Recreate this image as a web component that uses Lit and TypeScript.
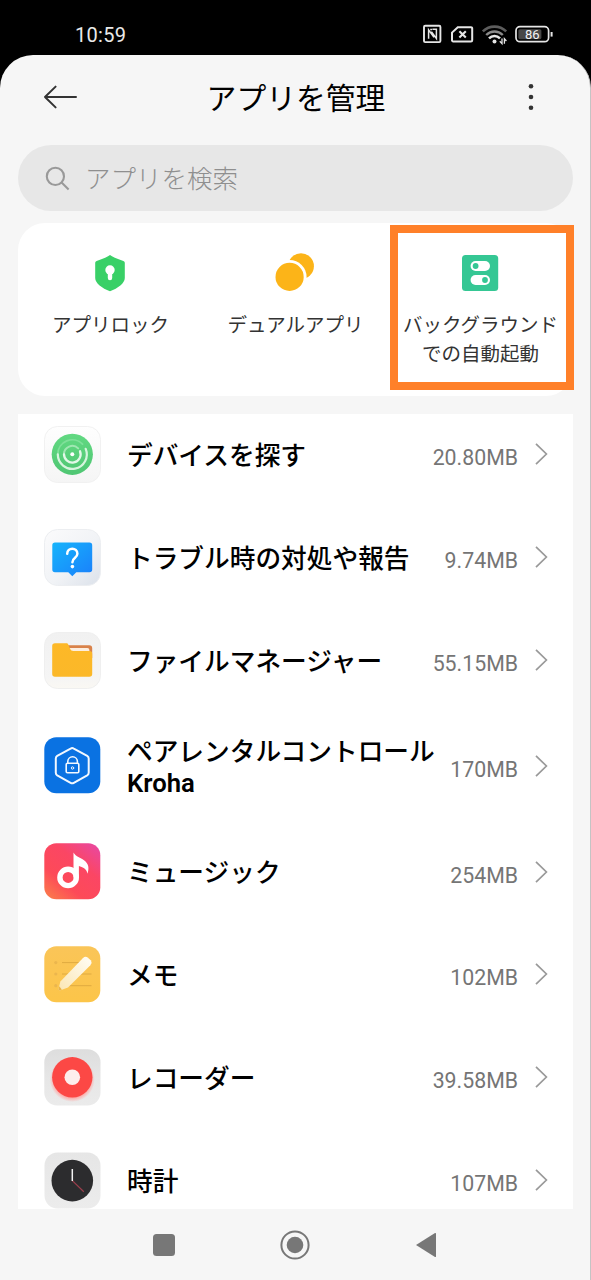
import { LitElement, html, css, svg } from "lit";
import { customElement, property } from "lit/decorators.js";

const icons: Record<string, unknown> = {
  find: svg`
    <defs>
      <linearGradient id="a" x1="0" y1="0" x2="0" y2="1"><stop offset="0" stop-color="#fefefe"/><stop offset="1" stop-color="#f5f5f5"/></linearGradient>
      <linearGradient id="b" x1="0" y1="0" x2="0" y2="1"><stop offset="0" stop-color="#62d982"/><stop offset="1" stop-color="#4fc673"/></linearGradient>
    </defs>
    <rect x=".5" y=".5" width="56" height="56" rx="13" fill="url(#a)" stroke="#f1f1f1"/>
    <circle cx="28.3" cy="28.3" r="20.6" fill="url(#b)"/>
    <g fill="none" stroke-linecap="round" transform="translate(28.3 28.3)">
      <path d="M-14.5 0A14.5 14.5 0 0 1 10.25 -10.25" stroke="#7fe09a" stroke-width="1.8"/>
      <path d="M13.4 -5.5A14.5 14.5 0 1 1 -14.5 0" stroke="#d6f5de" stroke-width="2.2"/>
      <path d="M-8.3 0A8.3 8.3 0 0 1 5.9 -5.9" stroke="#a0e7b3" stroke-width="2"/>
      <path d="M7.7 -3.1A8.3 8.3 0 1 1 -8.3 0" stroke="#e2f8e8" stroke-width="2.3"/>
    </g>
    <circle cx="28.3" cy="28.3" r="2" fill="#fff"/>`,
  help: svg`
    <defs>
      <linearGradient id="a" x1="0" y1="0" x2="1" y2="1"><stop offset="0" stop-color="#fbfbfc"/><stop offset=".55" stop-color="#f1f3f6"/><stop offset="1" stop-color="#dbe1ea"/></linearGradient>
      <linearGradient id="b" x1="0" y1="0" x2="1" y2="1"><stop offset="0" stop-color="#16b4fb"/><stop offset="1" stop-color="#1a80fb"/></linearGradient>
    </defs>
    <rect x=".5" y=".5" width="56" height="56" rx="13" fill="url(#a)" stroke="#eceef1"/>
    <path d="M11 13.5H45.5A2.7 2.7 0 0 1 48.2 16.2V40.6A2.7 2.7 0 0 1 45.5 43.3H32.3L28.3 47.3L24.3 43.3H11A2.7 2.7 0 0 1 8.3 40.6V16.2A2.7 2.7 0 0 1 11 13.5Z" fill="url(#b)"/>
    <path d="M23.2 24.8C23.2 18 33.4 18 33.4 24.8C33.4 28.8 28.4 28.6 28.4 33.2" fill="none" stroke="#fff" stroke-width="2.5" stroke-linecap="round"/>
    <circle cx="28.4" cy="37.6" r="1.8" fill="#fff"/>`,
  files: svg`
    <defs>
      <linearGradient id="a" x1="0" y1="0" x2="0" y2="1"><stop offset="0" stop-color="#f1f1f1"/><stop offset=".8" stop-color="#f5f5f5"/><stop offset="1" stop-color="#faf8f3"/></linearGradient>
      <linearGradient id="b" x1="0" y1="0" x2="0" y2="1"><stop offset="0" stop-color="#fdb827"/><stop offset="1" stop-color="#fbb829"/></linearGradient>
    </defs>
    <rect x=".5" y=".5" width="56" height="56" rx="13" fill="url(#a)" stroke="#efefef"/>
    <path d="M22 13.2H45.2A3 3 0 0 1 48.2 16.2V26H22Z" fill="#d9824a"/>
    <path d="M24 16H43.4A2 2 0 0 1 45.4 18V24H24Z" fill="#fdeede"/>
    <path d="M11 11.3H22.6C24.4 11.3 24.8 14 26 16.6C27 18.6 27.6 19 29.4 19H45.4A2.8 2.8 0 0 1 48.2 21.8V42A2.8 2.8 0 0 1 45.4 44.8H11A2.8 2.8 0 0 1 8.2 42V14.1A2.8 2.8 0 0 1 11 11.3Z" fill="url(#b)"/>`,
  kroha: svg`
    <rect x=".3" y=".3" width="56" height="56" rx="12" fill="#0a72e2"/>
    <g fill="none" stroke="#f2f8ff" stroke-linejoin="round" stroke-linecap="round">
      <path d="M26.6 11.6Q28.2 10.6 29.8 11.6L43.2 18.9Q44.7 19.8 44.7 21.4V35.8Q44.7 37.4 43.2 38.3L29.8 45.9Q28.2 46.8 26.6 45.9L13.2 38.3Q11.8 37.4 11.8 35.8V21.4Q11.8 19.8 13.2 18.9Z" stroke-width="2"/>
      <rect x="22.2" y="26.2" width="12.6" height="9.6" rx="1.2" stroke-width="1.6"/>
      <path d="M23.8 26V24.6A4.8 4.8 0 0 1 33.4 24.6V26" stroke-width="1.6"/>
      <circle cx="28.5" cy="31" r="1.2" stroke-width="1"/>
    </g>`,
  music: svg`
    <defs>
      <linearGradient id="a" x1=".1" y1="1" x2=".9" y2="0"><stop offset="0" stop-color="#fb7a4c"/><stop offset=".3" stop-color="#fd4a58"/><stop offset=".65" stop-color="#fb4664"/><stop offset="1" stop-color="#e9489f"/></linearGradient>
    </defs>
    <rect x=".3" y=".3" width="56" height="56" rx="12" fill="url(#a)"/>
    <circle cx="24.1" cy="34.4" r="8.2" fill="none" stroke="#fff" stroke-width="5.4"/>
    <path d="M29.5 34.6V9.6C32 14 36.6 14.6 40 17.3C44.6 20.5 45.5 25 43.4 30.8C43 27 41 24.9 34.9 23V34.6Z" fill="#fff"/>`,
  memo: svg`
    <defs>
      <linearGradient id="a" x1="0" y1="0" x2="0" y2="1"><stop offset="0" stop-color="#fac558"/><stop offset="1" stop-color="#fcc549"/></linearGradient>
      <linearGradient id="b" x1="1" y1="0" x2="0" y2="1"><stop offset="0" stop-color="#fffdf6"/><stop offset="1" stop-color="#fbe6b2"/></linearGradient>
    </defs>
    <rect x=".3" y=".3" width="56" height="56" rx="12" fill="url(#a)"/>
    <g stroke="#dfaa40" stroke-width="1">
      <path d="M18 16.6H37M18 28H26M37 28H47.5M24 39.7H47.5"/>
    </g>
    <g fill="#ebb64e"><circle cx="11.8" cy="16.6" r="1.6"/><circle cx="11.8" cy="28" r="1.6"/><circle cx="11.8" cy="39.7" r="1.6"/></g>
    <path d="M14.6 42.8L16.4 35.4L38.8 12.2Q41.2 10 43.6 11.4L47 14.6Q48.4 16.8 46.4 19.2L24 41.4L16.6 44.2Q14.2 44.8 14.6 42.8Z" fill="url(#b)"/>
    <path d="M14.6 42.8L15.2 40.2L17.8 43.6L16.6 44.2Q14.2 44.8 14.6 42.8Z" fill="#e8b44b"/>`,
  recorder: svg`
    <defs>
      <linearGradient id="a" x1="0" y1="0" x2="0" y2="1"><stop offset="0" stop-color="#dddddd"/><stop offset=".5" stop-color="#e6e6e6"/><stop offset="1" stop-color="#ebebeb"/></linearGradient>
      <radialGradient id="b"><stop offset=".8" stop-color="#fda9a6"/><stop offset="1" stop-color="#fda9a6" stop-opacity="0"/></radialGradient>
    </defs>
    <rect x=".3" y=".3" width="56.2" height="56.2" rx="13" fill="url(#a)"/>
    <circle cx="28.3" cy="30.5" r="22.5" fill="url(#b)"/>
    <circle cx="28.3" cy="28.3" r="20.2" fill="#fc4845"/>
    <circle cx="28.3" cy="28.3" r="7.8" fill="#fdeeec"/>`,
  clock: svg`
    <defs>
      <linearGradient id="a" x1="0" y1="0" x2="0" y2="1"><stop offset="0" stop-color="#e6e6e6"/><stop offset="1" stop-color="#ececec"/></linearGradient>
    </defs>
    <rect x=".5" y=".5" width="56" height="56" rx="13" fill="url(#a)"/>
    <circle cx="28.3" cy="28.6" r="20.8" fill="#2c2c2e"/>
    <path d="M28.3 28.6L39.8 39.8" stroke="#9c3f4d" stroke-width="1.2"/>
    <path d="M28.3 17V29" stroke="#f3f3f3" stroke-width="1.5"/>`,
};

@customElement("app-row")
class AppRow extends LitElement {
  @property() icon = "";
  @property() name = "";
  @property() size = "";

  static styles = css`
    :host {
      display: flex;
      align-items: center;
      box-sizing: border-box;
      flex: none;
      height: 102.9px;
      padding: 0 25px 0 26px;
    }
    :host([tall]) { height: 108.4px; }
    .icon { width: 57px; height: 57px; flex: none; display: block; }
    .name {
      flex: 1;
      margin-left: 26px;
      padding-top: 3px;
      font-size: 25.7px;
      line-height: 32px;
      font-weight: 500;
      color: #000;
      white-space: pre;
    }
    .latin { font-weight: 600; line-height: 30px; }
    .size { font-size: 21.3px; line-height: 26px; color: #757575; padding-top: 8px; }
    .chevron { width: 13px; height: 24px; flex: none; margin: 0 0 0 17px; }
  `;

  render() {
    const [first, second] = this.name.split("\n");
    return html`
      <svg class="icon" viewBox="0 0 57 57">${icons[this.icon]}</svg>
      <div class="name">${first}${second ? html`<div class="latin">${second}</div>` : ""}</div>
      <div class="size">${this.size}</div>
      <svg class="chevron" viewBox="0 0 13 24"><path d="M1 1.8L11.4 12L1 22.2" fill="none" stroke="#999" stroke-width="1.7"/></svg>
    `;
  }
}

@customElement("app-root")
class AppRoot extends LitElement {
  static styles = css`
    :host {
      display: flex;
      flex-direction: column;
      height: 1280px;
      background: #000;
      overflow: hidden;
      font-family: Roboto, "Noto Sans CJK JP", sans-serif;
    }
    svg { display: block; flex: none; }
    .status {
      height: 55px;
      flex: none;
      box-sizing: border-box;
      padding: 13px 38px 0 75px;
      display: flex;
      justify-content: space-between;
      align-items: center;
      color: #e9e9e9;
    }
    .time { font-size: 20px; line-height: 24px; font-weight: 450; letter-spacing: .3px; padding-top: 1px; }
    .battery { font-size: 13px; font-weight: 400; }
    .sheet {
      flex: 1;
      min-height: 0;
      display: flex;
      flex-direction: column;
      box-sizing: border-box;
      background: #f6f6f6;
      border-right: 1px solid #c4c4c4;
      border-radius: 33px 33px 0 0;
      padding: 0 17px 0 18px;
    }
    .header {
      height: 84px;
      flex: none;
      display: grid;
      grid-template-columns: 36px 1fr 36px;
      align-items: center;
      padding: 0 24px 0 25px;
    }
    .title { font-size: 29.8px; line-height: 40px; color: #000; margin-top: 3px; text-align: center; }
    .more { justify-self: center; }
    .search {
      margin-top: 6px;
      height: 66px;
      flex: none;
      border-radius: 33px;
      background: #e7e7e7;
      display: flex;
      align-items: center;
      padding-left: 27px;
      font-size: 25.5px;
      color: #8f8f8f;
      font-weight: 300;
    }
    .search span { margin-left: 15px; line-height: 34px; padding-top: 2px; }
    .quick {
      position: relative;
      margin-top: 12px;
      height: 173px;
      flex: none;
      border-radius: 27px;
      background: #fff;
      display: grid;
      grid-template-columns: repeat(3, 1fr);
    }
    .tile {
      display: flex;
      flex-direction: column;
      align-items: center;
      padding: 30px 0 0;
      font-size: 19.5px;
      line-height: 28.5px;
      color: #333;
      text-align: center;
      white-space: nowrap;
    }
    .tile svg { margin: 0 1px 19px 0; }
    .highlight {
      position: absolute;
      left: 372px;
      top: 2px;
      width: 184px;
      height: 165px;
      box-sizing: border-box;
      border: 8px solid #ff8029;
    }
    .list {
      margin-top: 18px;
      height: 795px;
      flex: none;
      background: #fff;
      overflow: hidden;
      display: flex;
      flex-direction: column;
    }
    .list app-row:first-child { margin-top: -11px; }
    .nav { flex: 1; display: flex; align-items: center; padding-left: 133.5px; }
    .nav svg + svg { margin-left: 104px; }
    .nav svg + svg + svg { margin-left: 105px; }
  `;

  render() {
    return html`
      <div class="status">
        <div class="time">10:59</div>
        <svg width="132" height="24" viewBox="0 0 132 24" fill="none" stroke="#e6e6e6">
          <rect x="3" y="3.7" width="16.4" height="16.4" rx="1.2" stroke-width="1.9"/>
          <path d="M7.6 16.8V7.8L13 15.4M9.2 7.4L11 7.4M11.4 7.2H15.4V16.4L10.4 9.6" stroke-width="1.5"/>
          <path d="M36.8 5.2H50A1.2 1.2 0 0 1 51.2 6.4V18.2A1.2 1.2 0 0 1 50 19.4H32.2A1.2 1.2 0 0 1 31 18.2V10.6Z" stroke-width="2"/>
          <path d="M38.4 9.2L44.8 15.6M44.8 9.2L38.4 15.6" stroke-width="2.1"/>
          <path d="M61.8 9.4C68.5 3 78.5 3 85.2 9.4" stroke="#5d5d5d" stroke-width="2.6"/>
          <path d="M65.2 13C70 8.4 77 8.4 81.8 13" stroke="#8b8b8b" stroke-width="2.4"/>
          <path d="M68 16.4C71.2 13.2 75.8 13.2 79 16.4" stroke-width="2.6"/>
          <circle cx="73.5" cy="19.4" r="2" fill="#e6e6e6" stroke="none"/>
          <path d="M81 16.6V21.6L78.8 19.2M83.4 21.8V16.8L85.4 19" stroke-width="1.3"/>
          <rect x="95" y="4.7" width="32.6" height="15" rx="4" stroke-width="1.7"/>
          <rect x="97.4" y="7.2" width="23" height="10" rx="1.6" fill="#484848" stroke="none"/>
          <path d="M130.6 10V14.6" stroke-width="2"/>
          <text class="battery" x="111.2" y="16.9" text-anchor="middle" fill="#f4f4f4" stroke="none">86</text>
        </svg>
      </div>
      <div class="sheet">
        <div class="header">
          <svg width="36" height="26" viewBox="0 0 36 26" fill="none" stroke="#333" stroke-width="2" stroke-linecap="round" stroke-linejoin="round"><path d="M33 13H2L12.6 2.6M2 13L12.6 23.4"/></svg>
          <div class="title">アプリを管理</div>
          <svg class="more" width="6" height="28" viewBox="0 0 6 28" fill="#333"><circle cx="3" cy="3.3" r="2.3"/><circle cx="3" cy="14" r="2.3"/><circle cx="3" cy="24.7" r="2.3"/></svg>
        </div>
        <div class="search">
          <svg width="25" height="25" viewBox="0 0 25 25" fill="none" stroke="#999" stroke-width="2.1"><circle cx="10.4" cy="10.4" r="8.6"/><path d="M16.6 16.6L23.6 23.4"/></svg>
          <span>アプリを検索</span>
        </div>
        <div class="quick">
          <div class="tile">
            <svg width="40" height="40" viewBox="0 0 40 40"><path d="M20 2Q23 4.6 33.4 8Q34.8 8.5 34.8 9.8V25C34.8 30 28 35.4 20 38.2C12 35.4 5.2 30 5.2 25V9.8Q5.2 8.5 6.6 8Q17 4.6 20 2Z" fill="#39d067"/><circle cx="20" cy="17" r="4.7" fill="#fff"/><path d="M20 19V25" stroke="#fff" stroke-width="4.4" stroke-linecap="round"/></svg>
            <div>アプリロック</div>
          </div>
          <div class="tile">
            <svg width="40" height="40" viewBox="0 0 40 40"><circle cx="26" cy="13.2" r="12.9" fill="#fcb418"/><circle cx="14.6" cy="23.9" r="17" fill="#fff"/><circle cx="14.6" cy="23.9" r="14.1" fill="#fcb418"/></svg>
            <div>デュアルアプリ</div>
          </div>
          <div class="tile">
            <svg width="40" height="40" viewBox="0 0 40 40"><rect x="2" y="2" width="36.2" height="36" rx="3.5" fill="#35c794"/><rect x="10.6" y="8" width="19.4" height="10" rx="5" fill="#fff"/><rect x="10.6" y="22" width="19.4" height="10" rx="5" fill="#fff"/><circle cx="15.6" cy="13" r="2.9" fill="#35c794"/><circle cx="25" cy="27" r="2.9" fill="#35c794"/></svg>
            <div>バックグラウンド<br>での自動起動</div>
          </div>
          <div class="highlight"></div>
        </div>
        <div class="list">
          <app-row icon="find" name="デバイスを探す" size="20.80MB"></app-row>
          <app-row icon="help" name="トラブル時の対処や報告" size="9.74MB"></app-row>
          <app-row icon="files" name="ファイルマネージャー" size="55.15MB"></app-row>
          <app-row tall icon="kroha" name=${"ペアレンタルコントロール\nKroha"} size="170MB"></app-row>
          <app-row icon="music" name="ミュージック" size="254MB"></app-row>
          <app-row icon="memo" name="メモ" size="102MB"></app-row>
          <app-row icon="recorder" name="レコーダー" size="39.58MB"></app-row>
          <app-row icon="clock" name="時計" size="107MB"></app-row>
        </div>
        <div class="nav">
          <svg width="24" height="24" viewBox="0 0 24 24"><rect x="1" y="1" width="22" height="22" rx="3.5" fill="#777"/></svg>
          <svg width="30" height="30" viewBox="0 0 30 30"><circle cx="15" cy="15" r="13.6" fill="none" stroke="#777" stroke-width="2"/><circle cx="15" cy="15" r="8.3" fill="#777"/></svg>
          <svg width="22" height="26" viewBox="0 0 22 26"><path d="M1 13L20 1Q21 .6 21 1.8V24.2Q21 25.4 20 25Z" fill="#777"/></svg>
        </div>
      </div>
    `;
  }
}
